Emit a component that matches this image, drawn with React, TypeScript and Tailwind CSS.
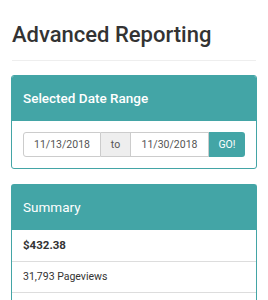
import React from 'react';

// simple reporting page: date range card + summary card
const App: React.FC = () => {
  return (
    <div className="min-h-screen bg-white px-[11px] pt-[20px] font-['Roboto',sans-serif] text-[#333]">
      {/* page title */}
      <h1 className="pl-[1px] text-[22px] leading-[30px] font-medium text-[#333]">Advanced Reporting</h1>
      <hr className="mt-[10px] mx-[1px] border-t border-[#eee]" />

      {/* date range card */}
      <div className="mt-[14px] rounded-[3px] border border-[#43a5a6] overflow-hidden">
        <div className="bg-[#43a5a6] h-[45px] flex items-center px-[11px]">
          <h2 className="text-[13.5px] font-medium text-white">Selected Date Range</h2>
        </div>
        <div className="px-[11px] pt-[11px] pb-[11px]">
          <div className="flex h-[25px] text-[10.5px]">
            <div className="w-[78px] flex items-center justify-center border border-[#ccc] rounded-l-[3px] text-[#555]">11/13/2018</div>
            <div className="w-[29px] flex items-center justify-center bg-[#eee] border-y border-[#ccc] text-[#555]">to</div>
            <div className="w-[79px] flex items-center justify-center border border-[#ccc] text-[#555]">11/30/2018</div>
            <button className="w-[36px] bg-[#43a5a6] text-white text-[10.5px] rounded-r-[3px]">GO!</button>
          </div>
        </div>
      </div>

      {/* summary card */}
      <div className="mt-[15px] rounded-t-[3px] border border-b-0 border-[#43a5a6]">
        <div className="bg-[#43a5a6] h-[45px] flex items-center px-[11px]">
          <h2 className="text-[13.5px] font-normal text-white">Summary</h2>
        </div>
        <div className="h-[31px] flex items-center px-[11px] text-[11.5px] font-bold text-[#333]">$432.38</div>
        <div className="h-[31px] flex items-center px-[11px] text-[10.5px] text-[#333] border-t border-[#ddd]">31,793 Pageviews</div>
        <div className="h-[31px] border-t border-[#ddd]" />
      </div>
    </div>
  );
};

export default App;
